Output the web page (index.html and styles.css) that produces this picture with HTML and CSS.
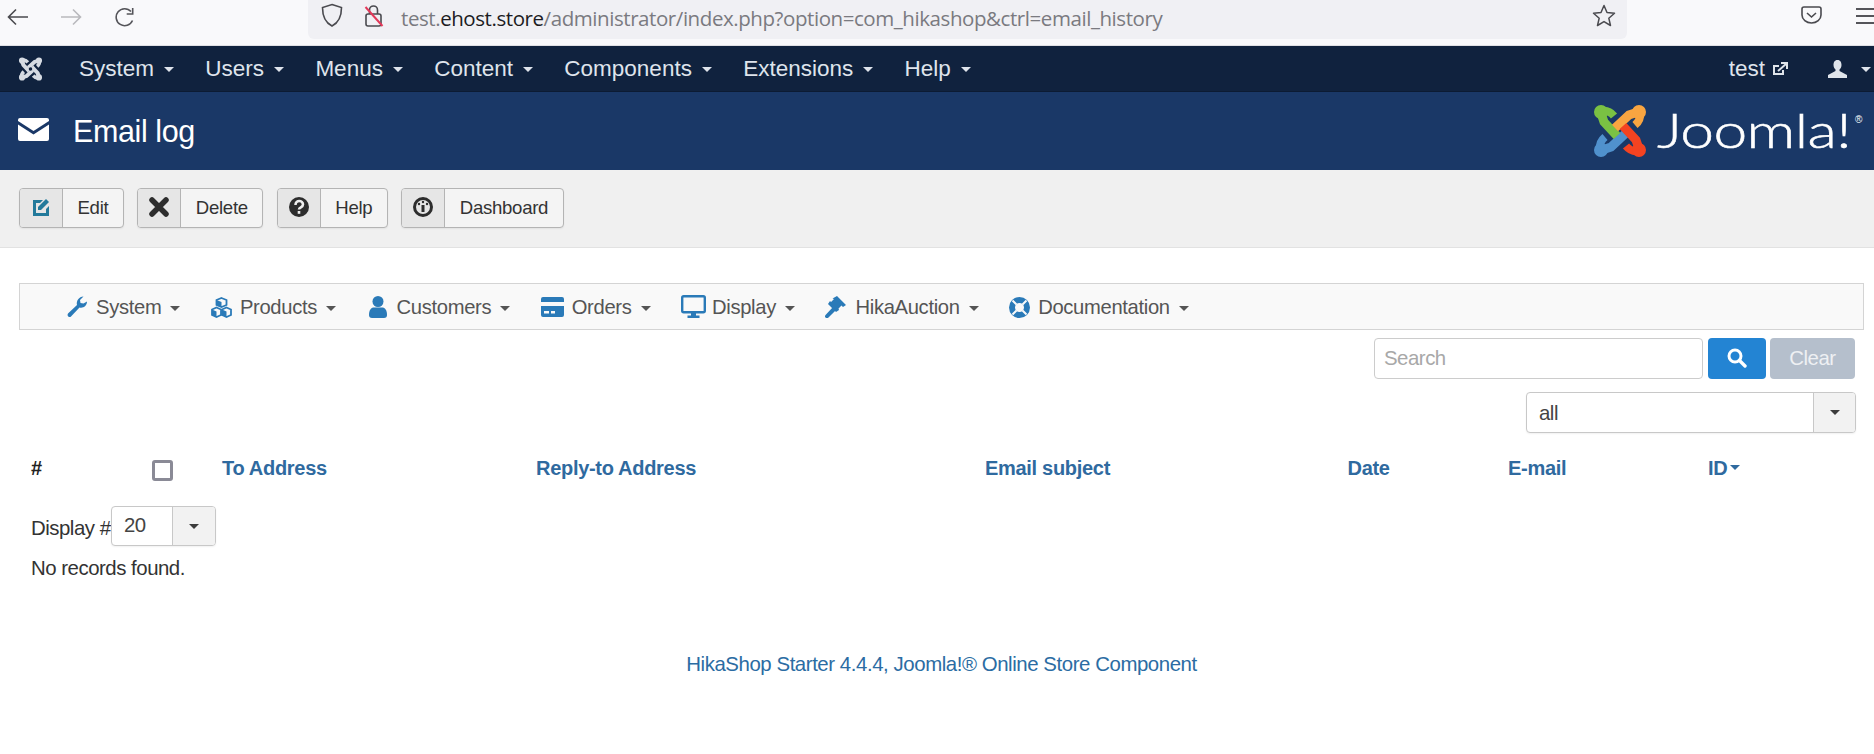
FILE: index.html
```html
<!DOCTYPE html>
<html lang="en">
<head>
<meta charset="utf-8">
<title>Email log</title>
<link rel="stylesheet" href="styles.css">
</head>
<body>
<div class="chrome">
  <svg class="c-back" viewBox="0 0 22 18"><path d="M21 9H2M9 1.500 1.500 9 9 16.500" fill="none" stroke="#4a4a4f" stroke-width="1.600"/></svg>
  <svg class="c-fwd" viewBox="0 0 22 18"><path d="M1 9h19M13 1.500 20.500 9 13 16.500" fill="none" stroke="#b9b9bd" stroke-width="1.600"/></svg>
  <svg class="c-reload" viewBox="0 0 22 20"><path d="M18.500 13.500A8.500 8.500 0 1 1 17 4.500" fill="none" stroke="#55555a" stroke-width="1.600"/><path d="M18.700 1v6h-6" fill="none" stroke="#55555a" stroke-width="1.600"/></svg>
  <div class="urlbar">
    <svg class="c-shield" viewBox="0 0 22 24"><path d="M11 1.500 20.500 4.500C20.500 14 18 19.500 11 23 4 19.500 1.500 14 1.500 4.500Z" fill="none" stroke="#4a4a4f" stroke-width="1.600"/></svg>
    <svg class="c-lock" viewBox="0 0 20 23"><rect x="2" y="10" width="15" height="12" rx="2" fill="none" stroke="#4a4a4f" stroke-width="1.600"/><path d="M5.500 10V6a4 4 0 0 1 8 0v4" fill="none" stroke="#4a4a4f" stroke-width="1.600"/><path d="M1.500 3 18.500 22" stroke="#e2395a" stroke-width="2"/></svg>
    <div class="url">test.<b>ehost.store</b>/administrator/index.php?option=com_hikashop&amp;ctrl=email_history</div>
    <svg class="c-star" viewBox="0 0 24 23"><path d="M12 1.500 15 8.500 22.500 9.200 16.800 14.200 18.500 21.500 12 17.600 5.500 21.500 7.200 14.200 1.500 9.200 9 8.500Z" fill="none" stroke="#4a4a4f" stroke-width="1.500" stroke-linejoin="round"/></svg>
  </div>
  <svg class="c-pocket" viewBox="0 0 21 18"><path d="M1 3a2 2 0 0 1 2-2h15a2 2 0 0 1 2 2v6a9.500 8 0 0 1-19 0Z" fill="none" stroke="#4a4a4f" stroke-width="1.600"/><path d="M6 7l4.500 4L15 7" fill="none" stroke="#4a4a4f" stroke-width="1.600"/></svg>
  <div class="c-menu"><span></span><span></span><span></span></div>
</div>

<nav class="navbar">
  <svg class="brand" viewBox="0 0 54 54">
    <g fill="none" stroke="#d6dbe2">
      <g>
        <path d="M8 9 11 18 24 32" stroke-width="9"/>
        <path d="M9 7Q16 6 21 12" stroke-width="8"/>
        <circle cx="8" cy="8" r="4" fill="#d6dbe2" stroke-width="6"/>
      </g>
      <g transform="rotate(90 27 27)">
        <path d="M8 9 11 18 24 32" stroke-width="9"/>
        <path d="M9 7Q16 6 21 12" stroke-width="8"/>
        <circle cx="8" cy="8" r="4" fill="#d6dbe2" stroke-width="6"/>
      </g>
      <g transform="rotate(180 27 27)">
        <path d="M8 9 11 18 24 32" stroke-width="9"/>
        <path d="M9 7Q16 6 21 12" stroke-width="8"/>
        <circle cx="8" cy="8" r="4" fill="#d6dbe2" stroke-width="6"/>
      </g>
      <g transform="rotate(270 27 27)">
        <path d="M8 9 11 18 24 32" stroke-width="9"/>
        <path d="M9 7Q16 6 21 12" stroke-width="8"/>
        <circle cx="8" cy="8" r="4" fill="#d6dbe2" stroke-width="6"/>
      </g>
    </g>
    <circle cx="27" cy="27" r="4" fill="#10223e"/>
  </svg>
  <ul class="nav-list">
    <li>System<i class="caret"></i></li>
    <li>Users<i class="caret"></i></li>
    <li>Menus<i class="caret"></i></li>
    <li>Content<i class="caret"></i></li>
    <li>Components<i class="caret"></i></li>
    <li>Extensions<i class="caret"></i></li>
    <li>Help<i class="caret"></i></li>
  </ul>
  <div class="nav-right">
    <span>test</span>
    <svg class="ext" viewBox="0 0 16 14"><path d="M11 8v4H2V4h5" fill="none" stroke="#dfe4ea" stroke-width="2"/><path d="M6 9 14 2M9 1h6v6" fill="none" stroke="#dfe4ea" stroke-width="2"/></svg>
    <svg class="usr" viewBox="0 0 19 18"><path d="M9.500 0C6.500 0 5.500 2.500 5.500 5c0 2 1 3.500 2 4.500v1.500L0 15v3h19v-3l-7.500-4V9.500c1-1 2-2.500 2-4.500 0-2.500-1-5-4-5Z" fill="#dfe4ea"/></svg>
    <i class="caret"></i>
  </div>
</nav>

<header class="title-bar">
  <svg class="mail" viewBox="0 0 31 23"><path d="M2 0h27a2 2 0 0 1 2 2v1L15.500 13 0 3V2a2 2 0 0 1 2-2Z" fill="#fff"/><path d="M0 6.500 15.500 16.500 31 6.500V21a2 2 0 0 1-2 2H2a2 2 0 0 1-2-2Z" fill="#fff"/></svg>
  <h1>Email log</h1>
  <svg class="logo" viewBox="0 0 271 54">
    <g fill="none">
      <g stroke="#5091cd" transform="rotate(270 27 27)">
        <path d="M8 9 11 18 24 32" stroke-width="9"/>
        <path d="M9 7Q16 6 21 12" stroke-width="8"/>
        <circle cx="8" cy="8" r="4" fill="#5091cd" stroke-width="6"/>
      </g>
      <g stroke="#7ac143">
        <path d="M8 9 11 18 24 32" stroke-width="9"/>
        <path d="M9 7Q16 6 21 12" stroke-width="8"/>
        <circle cx="8" cy="8" r="4" fill="#7ac143" stroke-width="6"/>
      </g>
      <g stroke="#f9a541" transform="rotate(90 27 27)">
        <path d="M8 9 11 18 24 32" stroke-width="9"/>
        <path d="M9 7Q16 6 21 12" stroke-width="8"/>
        <circle cx="8" cy="8" r="4" fill="#f9a541" stroke-width="6"/>
      </g>
      <g stroke="#f44321" transform="rotate(180 27 27)">
        <path d="M8 9 11 18 24 32" stroke-width="9"/>
        <path d="M9 7Q16 6 21 12" stroke-width="8"/>
        <circle cx="8" cy="8" r="4" fill="#f44321" stroke-width="6"/>
      </g>
    </g>
    <text class="logo-word" x="64" y="44" textLength="194" lengthAdjust="spacingAndGlyphs">Joomla!</text>
    <text class="logo-reg" x="262" y="19">®</text>
  </svg>
</header>

<div class="toolbar">
  <div class="tbtn">
    <span class="tbtn-icon"><svg class="i-18" viewBox="0 0 20 20"><path d="M2 3h10L9 6H5v10h10v-4l3-3v10H2Z" fill="#237a9b"/><path d="M7 10 15 2l3 3-8 8H7Z" fill="#237a9b"/></svg></span>
    <span class="tbtn-label">Edit</span>
  </div>
  <div class="tbtn">
    <span class="tbtn-icon"><svg class="i-18" viewBox="0 0 20 20"><path d="M3 3 17 17M17 3 3 17" stroke="#2d2d2d" stroke-width="5.500" stroke-linecap="round"/></svg></span>
    <span class="tbtn-label">Delete</span>
  </div>
  <div class="tbtn">
    <span class="tbtn-icon"><svg class="i-18" viewBox="0 0 20 20"><circle cx="10" cy="10" r="10" fill="#2d2d2d"/><path d="M6.500 8c0-5.500 7.500-5 7.500-.5 0 3-4 2.500-4 5" fill="none" stroke="#eee" stroke-width="2.600"/><rect x="8.700" y="14" width="2.600" height="2.800" fill="#eee"/></svg></span>
    <span class="tbtn-label">Help</span>
  </div>
  <div class="tbtn">
    <span class="tbtn-icon"><svg class="i-18" viewBox="0 0 20 20"><circle cx="10" cy="10" r="8.500" fill="none" stroke="#2d2d2d" stroke-width="3"/><path d="M10 8v7" stroke="#2d2d2d" stroke-width="3"/><circle cx="6" cy="7" r="1.200" fill="#2d2d2d"/><circle cx="10" cy="5" r="1.200" fill="#2d2d2d"/><circle cx="14" cy="7" r="1.200" fill="#2d2d2d"/></svg></span>
    <span class="tbtn-label">Dashboard</span>
  </div>
</div>

<main class="main">
  <ul class="submenu">
    <li>
      <svg class="s-icon i-wrench" viewBox="0 0 21 22"><path d="M21 5.500c0 4-3.500 7-7.500 6L5 20.500c-1.500 1.500-4.500-.5-3-3l9-8.500C10 5 13 .5 17.500.5l-3.500 3.500.5 3 3 .5Z" fill="#2a7ab8"/></svg>System<i class="caret"></i>
    </li>
    <li>
      <svg class="s-icon i-cubes" viewBox="0 0 21 21"><g fill="none" stroke="#2a7ab8" stroke-width="1.800"><path d="M10.500 1 15.500 3V8L10.500 10 5.500 8V3Z"/><path d="M5.500 10.500 10 12.500V18L5.500 20 1 18V12.500Z"/><path d="M15.500 10.500 20 12.500V18L15.500 20 11 18V12.500Z"/></g><path d="M5.500 3 10.500 5V10L5.500 8ZM1 12.500 5.500 14.500V20L1 18ZM11 12.500 15.500 14.500V20L11 18Z" fill="#2a7ab8"/></svg>Products<i class="caret"></i>
    </li>
    <li>
      <svg class="s-icon i-user" viewBox="0 0 18 22"><circle cx="9" cy="5.500" r="5.500" fill="#2a7ab8"/><path d="M0 19c0-5 2-7.500 5-7.500h8c3 0 5 2.500 5 7.500 0 2-1 3-3 3H3c-2 0-3-1-3-3Z" fill="#2a7ab8"/></svg>Customers<i class="caret"></i>
    </li>
    <li>
      <svg class="s-icon i-card" viewBox="0 0 23 20"><path d="M2 0h19a2 2 0 0 1 2 2v3H0V2a2 2 0 0 1 2-2ZM0 9h23v9a2 2 0 0 1-2 2H2a2 2 0 0 1-2-2Z" fill="#2a7ab8"/><path d="M3 14h5v2.500H3ZM10 14h4v2.500h-4Z" fill="#f9f9f9"/></svg>Orders<i class="caret"></i>
    </li>
    <li>
      <svg class="s-icon i-desk" viewBox="0 0 25 24"><rect x="1.200" y="1.200" width="22.600" height="16" rx="1.500" fill="none" stroke="#2a7ab8" stroke-width="2.400"/><path d="M10 18h5v2.500h3.500V23h-12v-2.500H10Z" fill="#2a7ab8"/></svg>Display<i class="caret"></i>
    </li>
    <li>
      <svg class="s-icon i-gavel" viewBox="0 0 21 22"><path d="M12 0 21 9l-3 2-1.500-1.500-3 3L14 14l-3 2-8-8 2-3 1 1 3-3L7.500 2.500Z" fill="#2a7ab8"/><path d="M8 11l3 3-7.500 7.500c-1 1-2 1-3 0s-.5-2 .5-3Z" fill="#2a7ab8"/></svg>HikaAuction<i class="caret"></i>
    </li>
    <li>
      <svg class="s-icon i-ring" viewBox="0 0 21 21"><circle cx="10.500" cy="10.500" r="7.500" fill="none" stroke="#2a7ab8" stroke-width="6"/><path d="M3.500 3.500 7.500 7.500M17.500 3.500 13.500 7.500M3.500 17.500 7.500 13.500M17.500 17.500 13.500 13.500" stroke="#f9f9f9" stroke-width="2"/></svg>Documentation<i class="caret"></i>
    </li>
  </ul>

  <div class="search-row">
    <input class="search" type="text" placeholder="Search">
    <span class="btn-search"><svg class="i-search" viewBox="0 0 20 20"><circle cx="8" cy="8" r="6" fill="none" stroke="#fff" stroke-width="3"/><path d="M12.500 12.500 18 18" stroke="#fff" stroke-width="3.400" stroke-linecap="round"/></svg></span>
    <span class="btn-clear">Clear</span>
  </div>

  <div class="filter-row">
    <div class="chosen chosen-wide"><span class="chosen-val">all</span><span class="chosen-arrow"><i class="caret dark"></i></span></div>
  </div>

  <div class="thead">
    <span class="th-hash">#</span>
    <span class="check"></span>
    <a>To Address</a>
    <a>Reply-to Address</a>
    <a>Email subject</a>
    <a>Date</a>
    <a>E-mail</a>
    <a>ID<i class="caret link"></i></a>
  </div>

  <div class="display-row">
    <span class="display-label">Display #</span>
    <div class="chosen chosen-small"><span class="chosen-val">20</span><span class="chosen-arrow"><i class="caret dark"></i></span></div>
  </div>

  <p class="empty">No records found.</p>

  <footer class="credit">HikaShop Starter 4.4.4, Joomla!® Online Store Component</footer>
</main>
</body>
</html>
```
FILE: styles.css
```css
* { box-sizing: border-box; }
html, body { margin: 0; padding: 0; height: 754px; overflow: hidden; background: #fff; }
body { font-family: "Liberation Sans", Arial, sans-serif; font-size: 20.400px; letter-spacing: -0.480px; color: #333; }
ul { list-style: none; margin: 0; padding: 0; }
svg { display: block; flex: none; }

.caret { display: inline-block; width: 0; height: 0; border-top: 5.500px solid currentColor; border-left: 5.500px solid transparent; border-right: 5.500px solid transparent; }

/* browser chrome */
.chrome { height: 46px; background: #f9f9fb; border-bottom: 1px solid #e0e0e4; display: flex; align-items: flex-start; position: relative; }
.c-back { width: 22px; height: 18px; margin: 8px 0 0 7px; }
.c-fwd { width: 22px; height: 18px; margin: 8px 0 0 31px; }
.c-reload { width: 22px; height: 20px; margin: 7px 0 0 32px; }
.urlbar { width: 1319px; height: 39px; margin-left: 172px; background: #f0f0f4; border-radius: 0 0 6px 6px; display: flex; align-items: flex-start; }
.c-shield { width: 22px; height: 24px; margin: 3px 0 0 13px; }
.c-lock { width: 20px; height: 23px; margin: 4px 0 0 21px; }
.url { margin: 4px 0 0 17px; width: 1170px; font-family: "Open Sans", sans-serif; font-size: 20.500px; line-height: 28px; color: #7a7a80; white-space: nowrap; letter-spacing: -0.430px; }
.url b { font-weight: 400; color: #1c1b22; }
.c-star { width: 24px; height: 23px; margin: 4px 0 0 21px; }
.c-pocket { width: 21px; height: 18px; margin: 6px 0 0 174px; }
.c-menu { margin: 8px 0 0 34px; width: 18px; display: flex; flex-direction: column; gap: 5px; }
.c-menu span { display: block; height: 2px; background: #55555a; }

/* navbar */
.navbar { height: 46px; background: #10223e; border-bottom: 1px solid #0c1b33; display: flex; align-items: center; color: #dfe4ec; font-size: 22.500px; letter-spacing: 0; }
.brand { width: 25px; height: 24px; margin-left: 18px; }
.nav-list { display: flex; margin-left: 36px; gap: 31.300px; }
.nav-list li { display: flex; align-items: center; }
.nav-list .caret, .nav-right .caret { margin-left: 10px; margin-top: 2px; }
.nav-right { margin-left: auto; display: flex; align-items: center; padding-right: 3px; }
.ext { width: 16px; height: 14px; margin-left: 7px; }
.usr { width: 19px; height: 18px; margin-left: 40px; }
.nav-right .caret { margin-left: 14px; }

/* title */
.title-bar { height: 78px; background: #1a3867; display: flex; align-items: center; position: relative; }
.mail { width: 31px; height: 23px; margin-left: 18px; margin-top: -3px; }
.title-bar h1 { margin: 0 0 0 24px; font-size: 30.500px; font-weight: 400; color: #fff; letter-spacing: -0.400px; }
.logo { width: 271px; height: 54px; margin-left: auto; margin-right: 10px; overflow: visible; }
.logo-word { font-family: "Lato", sans-serif; font-weight: 300; font-size: 47px; fill: #fff; stroke: #fff; stroke-width: 0.5px; }
.logo-reg { font-family: "Liberation Sans", sans-serif; font-size: 10px; letter-spacing: 0; fill: #fff; }

/* toolbar */
.toolbar { height: 78px; background: #f0f0f0; border-bottom: 1px solid #e2e2e2; padding: 18px 0 0 19px; display: flex; align-items: flex-start; gap: 13.500px; }
.tbtn { height: 40px; display: flex; border: 1px solid #b4b4b4; border-radius: 4px; background: #f4f4f4; font-size: 18.600px; letter-spacing: -0.300px; color: #333; box-shadow: 0 1px 2px rgba(0,0,0,.06); overflow: hidden; }
.tbtn-icon { width: 43px; background: #e6e6e6; border-right: 1px solid #b4b4b4; display: flex; align-items: center; justify-content: center; padding-bottom: 3px; }
.tbtn-label { padding: 0 14.500px; display: flex; align-items: center; }
.i-18 { width: 20px; height: 20px; }

/* main */
.main { margin: 35px 10px 0 19px; }
.submenu { height: 47px; background: #f9f9f9; border: 1px solid #d4d4d4; display: flex; align-items: center; padding-left: 46px; color: #555; font-size: 20.200px; letter-spacing: -0.320px; gap: 30.500px; }
.submenu li { display: flex; align-items: center; padding-top: 1px; }
.submenu .caret { margin-left: 9px; margin-top: 2px; }
.s-icon { margin-right: 8px; }
.i-wrench { width: 21px; height: 22px; margin-right: 9px; }
.i-cubes { width: 21px; height: 21px; }
.i-user { width: 18px; height: 22px; margin-left: 2px; margin-right: 10px; }
.i-card { width: 23px; height: 20px; }
.i-desk { width: 25px; height: 24px; margin-right: 6px; }
.i-gavel { width: 21px; height: 22px; margin-right: 9px; }
.i-ring { width: 21px; height: 21px; }

.search-row { display: flex; justify-content: flex-end; margin-top: 8px; padding-right: 9px; height: 41px; }
.search { width: 329px; height: 41px; border: 1px solid #ccc; border-radius: 4px; padding: 0 9px; font: inherit; letter-spacing: inherit; background: #fff; }
.search::placeholder { color: #a8a8a8; opacity: 1; }
.btn-search { width: 58px; margin-left: 5px; background: #2384d3; border-radius: 4px; display: flex; align-items: center; justify-content: center; }
.i-search { width: 20px; height: 20px; margin-top: -2px; }
.btn-clear { width: 85px; margin-left: 4px; background: #b5bfcc; border-radius: 4px; color: #eef0f3; display: flex; align-items: center; justify-content: center; padding-bottom: 1px; }

.filter-row { display: flex; justify-content: flex-end; margin-top: 13px; padding-right: 8px; }
.chosen { height: 41px; display: flex; border: 1px solid #c8c8c8; border-radius: 4px; background: #fff; overflow: hidden; box-shadow: 0 1px 2px rgba(0,0,0,.06); }
.chosen-wide { width: 330px; }
.chosen-small { width: 105px; height: 40px; }
.chosen-val { flex: 1; padding-left: 12px; display: flex; align-items: center; color: #444; }
.chosen-wide .chosen-val { padding-top: 1px; }
.chosen-wide .chosen-arrow { width: 42px; }
.chosen-small .chosen-arrow { width: 43px; }
.chosen-arrow { background: #f2f2f2; border-left: 1px solid #c8c8c8; display: flex; align-items: center; justify-content: center; }
.caret.dark { color: #3c3c3c; }

.thead { display: grid; grid-template-columns: 121px 70px 314px 449px 362.500px 160.500px 200px 1fr; padding-left: 12px; margin-top: 27px; height: 21px; align-items: center; font-weight: 700; font-size: 20px; letter-spacing: -0.300px; }
.thead a { color: #2f6a9f; display: flex; align-items: center; margin-top: -4px; }
.th-hash { color: #222; margin-top: -4px; }
.check { width: 21px; height: 21px; border: 3px solid #8a8a96; border-radius: 3px; background: #fff; }
.caret.link { margin-left: 3px; margin-top: -2px; }

.display-row { display: flex; align-items: center; margin-top: 25px; padding-left: 12px; height: 40px; }
.display-label { width: 80px; margin-top: 5px; white-space: nowrap; }
.chosen-small .chosen-val { padding-bottom: 2px; }
.empty { margin: 10px 0 0 12px; line-height: 24px; color: #333; }
.credit { margin-top: 72px; text-align: center; line-height: 24px; color: #2b6ca3; letter-spacing: -0.430px; }
```
